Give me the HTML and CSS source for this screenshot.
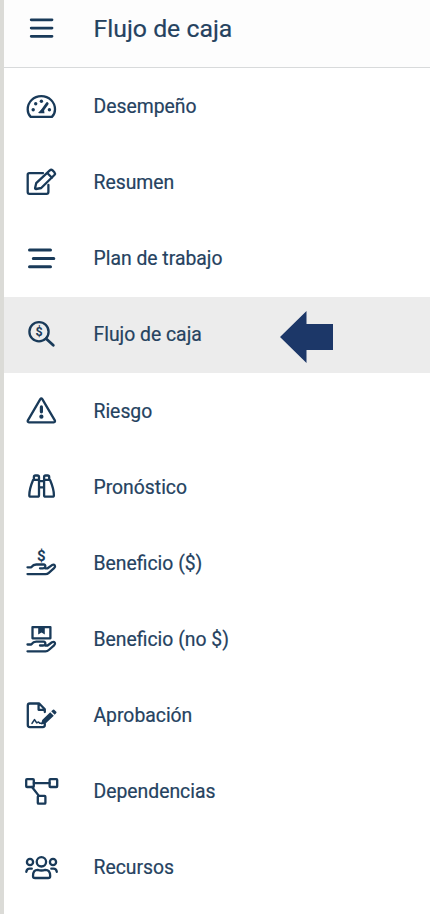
FILE: index.html
```html
<!DOCTYPE html>
<html lang="es">
<head>
<meta charset="utf-8">
<title>Flujo de caja</title>
<link rel="stylesheet" href="styles.css">
</head>
<body>
<div class="panel">
  <header class="header">
    <svg class="icon" viewBox="0 0 37 34"><path class="heavy" d="M8.2 7.8H29M8.2 16.1H29M8.2 24.3H29"/></svg>
    <h1 class="title">Flujo de caja</h1>
  </header>
  <nav class="menu">
    <a class="item">
      <svg class="icon" viewBox="0 0 37 34"><path d="M7.7 26.9H28.9C31 24.8 32 22 32 19.4C32 12 26 6.1 18.3 6.1S4.7 12 4.7 19.4C4.7 22 5.7 24.8 7.7 26.9Z"/><path class="heavy" d="M18.5 21.5L24.2 13.6"/><path class="fill" d="M15.2 22.4L20.8 17.8L21.5 23.2H16Z"/><g class="fill"><circle cx="10.2" cy="19.7" r="1.7"/><circle cx="12.7" cy="13.8" r="1.7"/><circle cx="18.4" cy="11.3" r="1.7"/><circle cx="26.4" cy="19.7" r="1.7"/></g></svg>
      <span class="label">Desempeño</span>
    </a>
    <a class="item">
      <svg class="icon" viewBox="0 0 37 34"><path d="M20 7.1H6.4Q4.7 7.1 4.7 8.8V26.1Q4.7 27.9 6.4 27.9H23.6Q25.4 27.9 25.4 26.1V19"/><path d="M13.2 17.2L26.8 4.3Q28.2 3.2 29.6 4.4L31.4 6.2Q32.6 7.6 31.4 9L18.2 22L13 23Q12 23 12.1 22ZM24.2 7L29 11.7"/></svg>
      <span class="label">Resumen</span>
    </a>
    <a class="item">
      <svg class="icon" viewBox="0 0 37 34"><path class="bar" d="M6.5 8H27.5M10.3 16.4H30.8M6.5 24.7H27.5"/></svg>
      <span class="label">Plan de trabajo</span>
    </a>
    <a class="item active">
      <svg class="icon" viewBox="0 0 37 34"><circle cx="16" cy="13.7" r="9.6"/><path class="heavy" d="M23.2 20.7L30.3 27.3"/><text class="coin" x="16" y="17.9">$</text></svg>
      <span class="label">Flujo de caja</span>
      <svg class="arrow" viewBox="0 0 53 52"><path d="M0 26L26.5 0V13H53V39H26.5V52Z"/></svg>
    </a>
    <a class="item">
      <svg class="icon" viewBox="0 0 37 34"><path d="M17.3 5.1Q18.3 3.6 19.3 5.1L31.8 26.3Q32.6 28.2 30.7 28.3H6Q4.1 28.2 4.9 26.3Z"/><path class="mark" d="M18.4 12.9V17.8"/><circle class="fill" cx="18.4" cy="22.7" r="2.1"/></svg>
      <span class="label">Riesgo</span>
    </a>
    <a class="item">
      <svg class="icon" viewBox="0 0 37 34"><path d="M10.9 9.5V7Q10.9 5.5 12.4 5.5H14.4Q16 5.5 16 7V25.2Q16 26.7 14.5 26.7H7.8Q6.3 26.7 6.3 25.2C6.3 19 8.6 13.5 10.1 9.9H16M26.2 9.5V7Q26.2 5.5 24.7 5.5H22.6Q21.1 5.5 21.1 7V25.2Q21.1 26.7 22.6 26.7H29.4Q30.9 26.7 30.9 25.2C30.9 19 28.5 13.5 27 9.9H21.1M16 11.2H21.1M16 17.3H21.1"/></svg>
      <span class="label">Pronóstico</span>
    </a>
    <a class="item">
      <svg class="icon" viewBox="0 0 37 34"><text class="dollar" x="18.3" y="14.6">$</text><path d="M4.5 21.3H8.2C10 19 11.5 18.5 13.2 18.5H20.5Q22.6 18.7 22.3 20.4Q22 22.2 20 22.3H17M22.2 22.3H24.6L29 19.1Q30.8 18.1 31.8 19.4Q32.6 20.8 31.1 22.1L25.8 26.8Q24.4 28.1 22.5 28.1H4.5"/></svg>
      <span class="label">Beneficio ($)</span>
    </a>
    <a class="item">
      <svg class="icon" viewBox="0 0 37 34"><path d="M9.5 4.1H27.4V15.3H9.5Z"/><path class="fill" d="M15.2 4H21.8V11.4L18.5 9.6L15.2 11.4Z"/><path d="M4.5 21.5H8.2C10 19.2 11.5 18.7 13.2 18.7H20.5Q22.6 18.9 22.3 20.6Q22 22.4 20 22.5H17M22.2 22.5H24.6L29 19.3Q30.8 18.3 31.8 19.6Q32.6 21 31.1 22.3L25.8 27Q24.4 28.3 22.5 28.3H4.5"/></svg>
      <span class="label">Beneficio (no $)</span>
    </a>
    <a class="item">
      <svg class="icon" viewBox="0 0 37 34"><path d="M21.8 13V10.3L16.2 4.5H6.8Q4.8 4.5 4.8 6.5V26.1Q4.8 28.1 6.8 28.1H19.8Q21.8 28.1 21.8 26.1V25M15.6 4.5V10.8H21.8"/><path class="thin" d="M9 24.4L11.5 20.6L13.7 23.9L15.5 23L17 24.3H20"/><path class="fill" d="M19.2 20.9L27.2 13.2L30.8 16.8L22.6 24.6L18.1 25.5ZM28.2 12.3L30 10.7Q30.6 10.2 31.2 10.7L33.3 12.8Q33.8 13.5 33.3 14.1L31.7 15.7Z"/></svg>
      <span class="label">Aprobación</span>
    </a>
    <a class="item">
      <svg class="icon" viewBox="0 0 37 34"><rect x="3.2" y="4.2" width="7.6" height="7.8" rx=".8"/><rect x="26.6" y="4.2" width="7.6" height="7.8" rx=".8"/><rect x="14.8" y="20.9" width="7.6" height="7.8" rx=".8"/><path d="M10.8 8.1H26.6M9 12L15.9 20.9"/></svg>
      <span class="label">Dependencias</span>
    </a>
    <a class="item">
      <svg class="icon" viewBox="0 0 37 34"><circle cx="18.4" cy="10.8" r="4.7"/><circle cx="7" cy="11" r="3.1"/><circle cx="30" cy="11" r="3.1"/><path d="M10 24.9C10 21.2 11.5 18.8 14.6 18.8Q18.4 20.2 22.3 18.8C25.4 18.8 27.2 21.2 27.2 24.9Q27.2 27 25.1 27H12.1Q10 27 10 24.9ZM3.3 20.8Q3.8 17.7 6.6 17.7H8.8M33.8 20.8Q33.3 17.7 30.5 17.7H28.3"/></svg>
      <span class="label">Recursos</span>
    </a>
  </nav>
</div>
</body>
</html>
```
FILE: styles.css
```css
* { box-sizing: border-box; }

body {
  margin: 0;
  background: #fff;
  color: #25425f;
  font-family: Roboto, "Liberation Sans", sans-serif;
  overflow: hidden;
}

.panel {
  height: 914px;
  border-left: 4px solid #dbdbd7;
}

.header {
  display: flex;
  align-items: center;
  height: 68px;
  padding: 0 0 9px 19px;
  border-bottom: 1px solid #d8dadb;
  background: #fdfdfd;
}

.title {
  margin: 0 0 0 33.5px;
  font-size: 24.8px;
  font-weight: 400;
  line-height: 30px;
  -webkit-text-stroke: 0.2px currentColor;
}

.menu { padding-top: 0.5px; }

.item {
  display: flex;
  align-items: center;
  height: 76.15px;
  padding-left: 19px;
}

.item.active { background: #ececec; }

.icon {
  flex: none;
  width: 37px;
  height: 34px;
  fill: none;
  stroke: #193a59;
  stroke-width: 2.3;
  stroke-linecap: round;
  stroke-linejoin: round;
}

.icon .heavy { stroke-width: 2.8; }
.icon .mark { stroke-width: 3.2; }
.icon .bar { stroke-width: 3; }
.icon .thin { stroke-width: 1.6; }
.icon .fill { fill: #193a59; stroke: none; }

.icon text {
  fill: #193a59;
  stroke: none;
  font-weight: 700;
  text-anchor: middle;
}

.coin { font-size: 12.5px; }
.dollar { font-size: 15px; }

.label {
  margin: 1px 0 0 33.5px;
  font-size: 19.35px;
  line-height: 24px;
  white-space: nowrap;
  -webkit-text-stroke: 0.2px currentColor;
}

.arrow {
  width: 53px;
  height: 52px;
  margin: 5px 0 0 78.5px;
  fill: #1c3768;
}
```
